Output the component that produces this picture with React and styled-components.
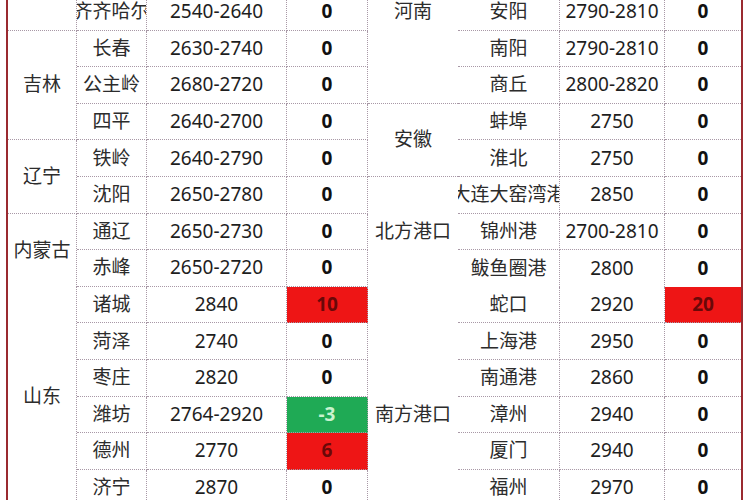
import React from "react";
import styled, { createGlobalStyle, css } from "styled-components";

const Global = createGlobalStyle`
  html, body { margin: 0; padding: 0; background: #fff; overflow: hidden; }
  body { font-family: "Noto Sans", "Noto Sans CJK SC", sans-serif; }
`;

const Viewport = styled.div`
  width: 750px;
  height: 500px;
  overflow: hidden;
  background: #fff;
`;

const ROW_H = 36.6;

const Sheet = styled.div`
  display: grid;
  grid-template-columns: 69px 70px 140px 81px 90px 102px 105px 76px;
  grid-auto-rows: ${ROW_H}px;
  width: max-content;
  margin: -6px 0 0 6px;
  border-left: 2px solid #9a2a30;
  border-right: 2px solid #9a2a30;
`;

const DOT = "1px dotted #a898a6";

const Cell = styled.div`
  grid-column: ${(p) => p.$col};
  grid-row: ${(p) => p.$row} / span ${(p) => p.$span || 1};
  box-sizing: border-box;
  display: flex;
  align-items: center;
  justify-content: center;
  overflow: hidden;
  white-space: nowrap;
  font-size: 19px;
  line-height: 1;
  color: #262626;
  border-bottom: ${(p) => (p.$open ? "none" : DOT)};
  border-right: ${(p) => (p.$noRight ? "none" : DOT)};
`;

/* merged province cell; $place says where its label sits when the merge runs past the crop */
const Province = styled(Cell)`
  color: #2c2c2c;
  ${(p) =>
    p.$place === "top" &&
    css`
      align-items: flex-start;
      padding-top: ${ROW_H / 2 - 10}px;
    `}
  ${(p) =>
    p.$place === "low" &&
    css`
      padding-top: ${ROW_H}px;
    `}
`;

const City = styled(Cell)`
  color: #2c2c2c;
`;

const Price = styled(Cell)`
  color: #1e1e1e;
`;

const Change = styled(Cell)`
  font-weight: 700;
  color: #111;
  ${(p) =>
    p.$tone === "red" &&
    css`
      background: #ee1515;
      color: #6a0808;
    `}
  ${(p) =>
    p.$tone === "green" &&
    css`
      background: #1faa55;
      color: #c9f3cf;
    `}
`;

const rows = [
  { lc: "齐齐哈尔", lpr: "2540-2640", lch: "0", rp: { name: "河南", span: 3, place: "top" }, rc: "安阳", rpr: "2790-2810", rch: "0" },
  { lp: { name: "吉林", span: 3 }, lc: "长春", lpr: "2630-2740", lch: "0", rc: "南阳", rpr: "2790-2810", rch: "0" },
  { lc: "公主岭", lpr: "2680-2720", lch: "0", rc: "商丘", rpr: "2800-2820", rch: "0" },
  { lc: "四平", lpr: "2640-2700", lch: "0", rp: { name: "安徽", span: 2 }, rc: "蚌埠", rpr: "2750", rch: "0" },
  { lp: { name: "辽宁", span: 2 }, lc: "铁岭", lpr: "2640-2790", lch: "0", rc: "淮北", rpr: "2750", rch: "0" },
  { lc: "沈阳", lpr: "2650-2780", lch: "0", rp: { name: "北方港口", span: 3, open: true }, rc: "大连大窑湾港", rpr: "2850", rch: "0" },
  { lp: { name: "内蒙古", span: 2, open: true }, lc: "通辽", lpr: "2650-2730", lch: "0", rc: "锦州港", rpr: "2700-2810", rch: "0" },
  { lc: "赤峰", lpr: "2650-2720", lch: "0", rc: "鲅鱼圈港", rpr: "2800", rch: "0", rOpen: true },
  { lp: { name: "山东", span: 6 }, lc: "诸城", lpr: "2840", lch: "10", ltone: "red", rp: { name: "南方港口", span: 6, place: "low" }, rc: "蛇口", rpr: "2920", rch: "20", rtone: "red" },
  { lc: "菏泽", lpr: "2740", lch: "0", rc: "上海港", rpr: "2950", rch: "0" },
  { lc: "枣庄", lpr: "2820", lch: "0", rc: "南通港", rpr: "2860", rch: "0" },
  { lc: "潍坊", lpr: "2764-2920", lch: "-3", ltone: "green", rc: "漳州", rpr: "2940", rch: "0" },
  { lc: "德州", lpr: "2770", lch: "6", ltone: "red", rc: "厦门", rpr: "2940", rch: "0" },
  { lc: "济宁", lpr: "2870", lch: "0", rc: "福州", rpr: "2970", rch: "0" },
];

export default function App() {
  return (
    <Viewport>
      <Global />
      <Sheet>
        {rows.map((r, i) => {
          const row = i + 1;
          return (
            <React.Fragment key={i}>
              {i === 0 && <Province $col={1} $row={row} />}
              {r.lp && (
                <Province $col={1} $row={row} $span={r.lp.span} $open={r.lp.open}>
                  {r.lp.name}
                </Province>
              )}
              <City $col={2} $row={row}>{r.lc}</City>
              <Price $col={3} $row={row}>{r.lpr}</Price>
              <Change $col={4} $row={row} $tone={r.ltone}>{r.lch}</Change>
              {r.rp && (
                <Province
                  $col={5}
                  $row={row}
                  $span={r.rp.span}
                  $open={r.rp.open}
                  $place={r.rp.place}
                  $noRight
                >
                  {r.rp.name}
                </Province>
              )}
              <City $col={6} $row={row} $open={r.rOpen}>{r.rc}</City>
              <Price $col={7} $row={row} $open={r.rOpen}>{r.rpr}</Price>
              <Change $col={8} $row={row} $open={r.rOpen} $tone={r.rtone} $noRight>
                {r.rch}
              </Change>
            </React.Fragment>
          );
        })}
      </Sheet>
    </Viewport>
  );
}
